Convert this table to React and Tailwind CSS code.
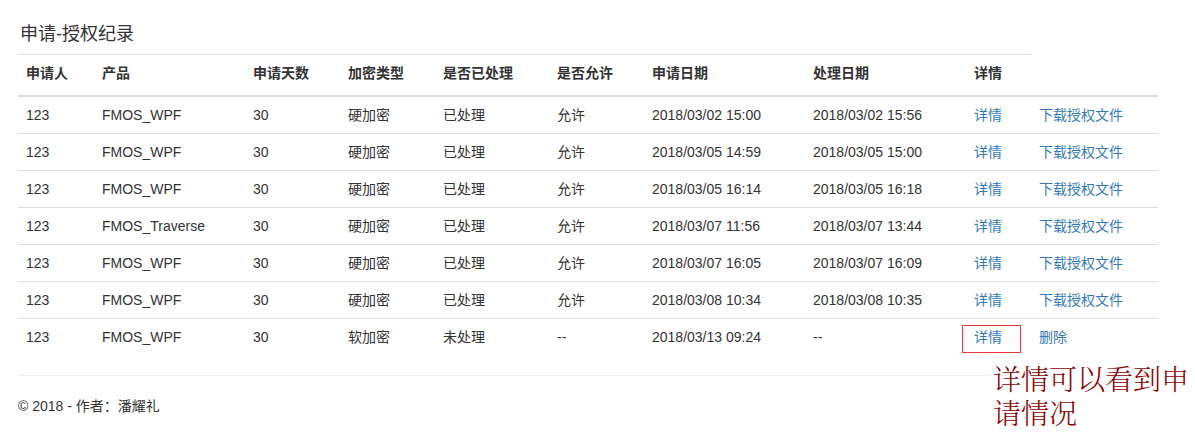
const rows = [
  ["123", "FMOS_WPF", "30", "硬加密", "已处理", "允许", "2018/03/02 15:00", "2018/03/02 15:56", "下载授权文件"],
  ["123", "FMOS_WPF", "30", "硬加密", "已处理", "允许", "2018/03/05 14:59", "2018/03/05 15:00", "下载授权文件"],
  ["123", "FMOS_WPF", "30", "硬加密", "已处理", "允许", "2018/03/05 16:14", "2018/03/05 16:18", "下载授权文件"],
  ["123", "FMOS_Traverse", "30", "硬加密", "已处理", "允许", "2018/03/07 11:56", "2018/03/07 13:44", "下载授权文件"],
  ["123", "FMOS_WPF", "30", "硬加密", "已处理", "允许", "2018/03/07 16:05", "2018/03/07 16:09", "下载授权文件"],
  ["123", "FMOS_WPF", "30", "硬加密", "已处理", "允许", "2018/03/08 10:34", "2018/03/08 10:35", "下载授权文件"],
  ["123", "FMOS_WPF", "30", "软加密", "未处理", "--", "2018/03/13 09:24", "--", "删除"],
];

const headers = ["申请人", "产品", "申请天数", "加密类型", "是否已处理", "是否允许", "申请日期", "处理日期", "详情"];
const widths = [76, 151, 95, 95, 114, 95, 161, 161, 65, 127];

export default function App() {
  return (
    <div
      className="relative min-h-[438px] bg-white pl-[18px] pr-[18px] pt-[24px] text-[14px] leading-[20px] text-[#333]"
      style={{ fontFamily: '"Liberation Sans", "Noto Sans CJK SC", sans-serif' }}
    >
      {/* title */}
      <h4 className="mb-[10px] pl-[2px] text-[18px] leading-[20px] font-normal text-[#333]">申请-授权纪录</h4>

      {/* records table */}
      <table className="w-[1140px] table-fixed border-separate border-spacing-0">
        <colgroup>
          {widths.map((w, i) => (
            <col key={i} style={{ width: w }} />
          ))}
        </colgroup>
        <thead>
          <tr>
            {headers.map((h) => (
              <th key={h} className="border-t border-[#ddd] px-2 pt-2 pb-[12px] text-left font-bold">
                {h}
              </th>
            ))}
          </tr>
        </thead>
        <tbody>
          {rows.map((r, i) => {
            const b = i === 0 ? "border-t-2" : "border-t";
            return (
              <tr key={i}>
                {r.slice(0, 8).map((c, j) => (
                  <td key={j} className={`${b} border-[#ddd] px-2 py-2 whitespace-nowrap`}>
                    {c}
                  </td>
                ))}
                <td className={`${b} border-[#ddd] px-2 py-2 text-[#337ab7]`}>详情</td>
                <td className={`${b} border-[#ddd] px-2 py-2 text-[#337ab7] whitespace-nowrap`}>{r[8]}</td>
              </tr>
            );
          })}
        </tbody>
      </table>

      <hr className="mt-5 mb-5 border-t border-[#eee]" />

      <footer>
        <p>© 2018 - 作者：潘耀礼</p>
      </footer>

      {/* annotation */}
      <div className="absolute left-[962px] top-[325px] h-[28px] w-[59px] border border-[#e53935]" />
      <div
        className="absolute left-[990px] top-[361px] w-[205px] bg-white pl-[3px] text-[28px] leading-[34px] font-light text-[#8b0000]"
        style={{ fontFamily: '"Noto Serif CJK SC", "Noto Sans CJK SC", serif' }}
      >
        详情可以看到申请情况
      </div>
    </div>
  );
}
